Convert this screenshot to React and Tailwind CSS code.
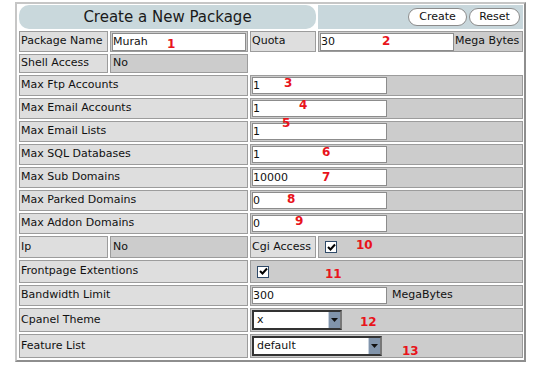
const Label = ({ w, children }) => (
  <div
    className={`${w} shrink-0 bg-[#dedede] border border-[#9c9c9c] flex items-center pl-[1px] whitespace-nowrap`}
  >
    {children}
  </div>
);

const Cell = ({ w, children, className = "" }) => (
  <div
    className={`${w} bg-[#cccccc] border border-[#9c9c9c] flex items-center whitespace-nowrap ${className}`}
  >
    {children}
  </div>
);

const TextBox = ({ value, w = "w-[135px]", h = "h-[17px]" }) => (
  <input
    readOnly
    value={value}
    className={`${w} ${h} bg-white border border-[#8c8c8c] px-0 text-[11px] text-[#111] outline-none font-['DejaVu_Sans',sans-serif]`}
  />
);

const Check = () => (
  <span className="w-[12px] h-[12px] bg-white border border-[#2f4a68] flex items-center justify-center">
    <svg width="9" height="9" viewBox="0 0 9 9">
      <path d="M1 4 L3.5 6.5 L8 1.5" fill="none" stroke="#000" strokeWidth="2" />
    </svg>
  </span>
);

const Select = ({ value, w }) => (
  <div
    className={`${w} h-[20px] flex bg-white border-2 border-t-[#333] border-l-[#333] border-b-[#333] border-r-[#777]`}
  >
    <span className="flex-1 pl-[3px] flex items-center text-[11px]">{value}</span>
    <span className="w-[12px] bg-[#8194ab] border-l border-[#c8d2de] flex items-center justify-center">
      <svg width="7" height="4" viewBox="0 0 7 4">
        <path d="M0 0 H7 L3.5 4 Z" fill="#111" />
      </svg>
    </span>
  </div>
);

const Num = ({ n, x, y }) => (
  <span
    className="absolute text-[12px] leading-none font-bold text-[#e8141b]"
    style={{ left: x, top: y }}
  >
    {n}
  </span>
);

const limits = [
  ["Max Ftp Accounts", "1"],
  ["Max Email Accounts", "1"],
  ["Max Email Lists", "1"],
  ["Max SQL Databases", "1"],
  ["Max Sub Domains", "10000"],
  ["Max Parked Domains", "0"],
  ["Max Addon Domains", "0"],
];

const notes = [
  [1, 167, 38],
  [2, 382, 35],
  [3, 284, 77],
  [4, 299, 99],
  [5, 282, 117],
  [6, 322, 146],
  [7, 322, 171],
  [8, 287, 193],
  [9, 295, 215],
  [10, 356, 239],
  [11, 325, 268],
  [12, 360, 316],
  [13, 402, 345],
];

export default function App() {
  return (
    <div className="relative w-[553px] h-[382px] bg-white pt-[2px] pl-[15px] text-[11px] text-[#111] font-['DejaVu_Sans',sans-serif]">
      <div className="w-[511px] border-2 border-t-[#c6c6c6] border-l-[#c6c6c6] border-r-[#8e8e8e] border-b-[#8e8e8e] pt-[1px] pl-[2px] pr-[1px] pb-[2px] flex flex-col gap-[2px]">
        {/* header */}
        <div className="h-[24px] flex gap-[2px]">
          <div className="w-[297px] rounded-[10px] bg-[#c9d8dc] flex items-center justify-center text-[15px] text-[#1a1a1a]">
            Create a New Package
          </div>
          <div className="flex-1 bg-[#c8d7dc] flex items-center justify-end gap-[2px] pr-[3px]">
            <button className="w-[59px] h-[18px] rounded-full bg-white border border-[#8c8c8c] text-[11px]">
              Create
            </button>
            <button className="w-[51px] h-[18px] rounded-full bg-white border border-[#8c8c8c] text-[11px]">
              Reset
            </button>
          </div>
        </div>

        <div className="h-[21px] flex gap-[2px]">
          <Label w="w-[89px]">Package Name</Label>
          <Cell w="w-[138px]" className="pl-[1px]">
            <TextBox value="Murah" w="w-[134px]" h="h-[18px]" />
          </Cell>
          <Label w="w-[66px]">Quota</Label>
          <Cell w="flex-1" className="pl-[1px] gap-[1px]">
            <TextBox value="30" w="w-[134px]" h="h-[18px]" />
            <span>Mega Bytes</span>
          </Cell>
        </div>

        <div className="h-[19px] flex gap-[2px]">
          <Label w="w-[89px]">Shell Access</Label>
          <Cell w="w-[138px]" className="pl-[2px]">
            No
          </Cell>
        </div>

        {limits.map(([label, value]) => (
          <div key={label} className="h-[21px] flex gap-[2px]">
            <Label w="w-[229px]">{label}</Label>
            <Cell w="flex-1" className="pl-[1px]">
              <TextBox value={value} />
            </Cell>
          </div>
        ))}

        <div className="h-[22px] flex gap-[2px]">
          <Label w="w-[89px]">Ip</Label>
          <Cell w="w-[138px]" className="pl-[2px]">
            No
          </Cell>
          <Label w="w-[66px]">Cgi Access</Label>
          <Cell w="flex-1" className="pl-[6px]">
            <Check />
          </Cell>
        </div>

        <div className="h-[23px] flex gap-[2px]">
          <Label w="w-[229px]">Frontpage Extentions</Label>
          <Cell w="flex-1" className="pl-[6px]">
            <Check />
          </Cell>
        </div>

        <div className="h-[21px] flex gap-[2px]">
          <Label w="w-[229px]">Bandwidth Limit</Label>
          <Cell w="flex-1" className="pl-[1px] gap-[5px]">
            <TextBox value="300" />
            <span>MegaBytes</span>
          </Cell>
        </div>

        <div className="h-[24px] flex gap-[2px]">
          <Label w="w-[229px]">Cpanel Theme</Label>
          <Cell w="flex-1" className="pl-[1px]">
            <Select value="x" w="w-[90px]" />
          </Cell>
        </div>

        <div className="h-[24px] flex gap-[2px]">
          <Label w="w-[229px]">Feature List</Label>
          <Cell w="flex-1" className="pl-[1px]">
            <Select value="default" w="w-[130px]" />
          </Cell>
        </div>
      </div>

      {notes.map(([n, x, y]) => (
        <Num key={n} n={n} x={x} y={y} />
      ))}
    </div>
  );
}
